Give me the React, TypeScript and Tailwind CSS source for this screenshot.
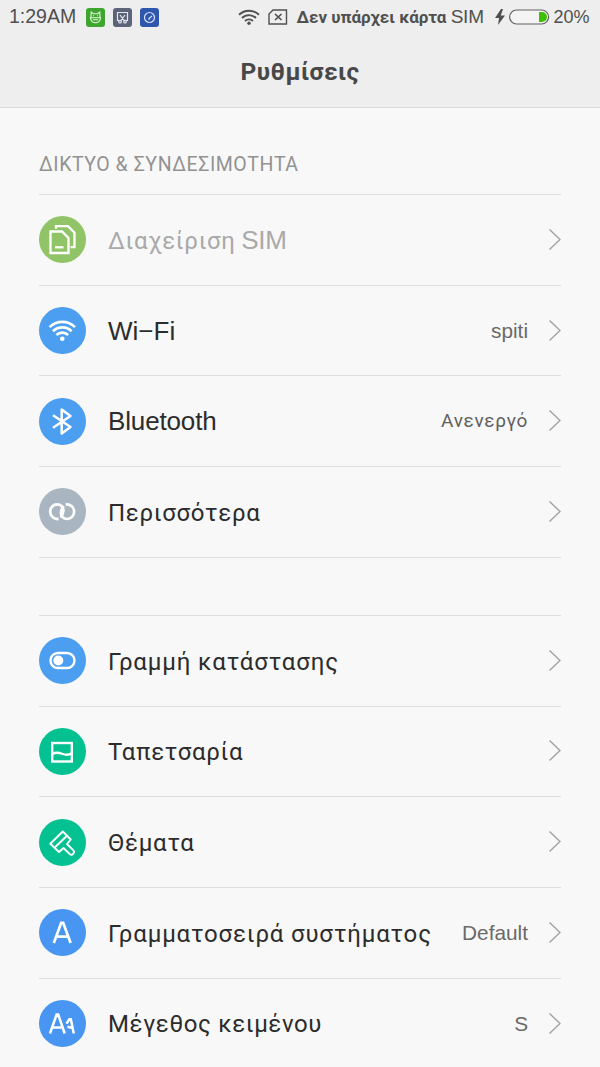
import React from "react";

const latin = "font-['Liberation_Sans',Arial,sans-serif]";

function Badge({ color, children }: { color: string; children: React.ReactNode }) {
  return (
    <span className={`flex h-[47px] w-[47px] shrink-0 items-center justify-center rounded-full ${color}`}>
      <svg width="47" height="47" viewBox="0 0 47 47" fill="none" stroke="#fff" strokeWidth="2">
        {children}
      </svg>
    </span>
  );
}

function Chevron() {
  return (
    <svg className="ml-[20px] shrink-0" width="13" height="22" viewBox="0 0 13 22" fill="none" stroke="#a4a4a4" strokeWidth="1.5">
      <path d="M1.500 .5l10.500 10L1.500 20.500" />
    </svg>
  );
}

type RowProps = {
  icon: React.ReactNode;
  label: React.ReactNode;
  value?: React.ReactNode;
  muted?: boolean;
};

function Row({ icon, label, value, muted }: RowProps) {
  return (
    <li className="flex h-[90.7px] items-center border-t border-[#dedede]">
      {icon}
      <span className={`ml-[22px] mt-[1.500px] grow whitespace-nowrap text-[24px] leading-[30px] ${muted ? "text-[#a9a9a9]" : "text-[#2c2c2c]"}`}>
        {label}
      </span>
      {value}
      <Chevron />
    </li>
  );
}

const simIcon = (
  <Badge color="bg-[#90c466]">
    <g strokeWidth="2.300">
      <path d="M11.500 15.500h11.500l6.500 6.500v15h-18z" />
      <path d="M17 12.800v-2.600h12l6.500 6.500v14.500h-4" />
      <path d="M16 31.300h8.500" />
    </g>
  </Badge>
);

const wifiIcon = (
  <Badge color="bg-[#4b9ef0]">
    <g strokeWidth="2.600">
      <path d="M10.600 20.100a18 18 0 0 1 25.400 0" />
      <path d="M14 24.200a13.300 13.300 0 0 1 18.600 0" />
      <path d="M17.400 28a8.500 8.500 0 0 1 11.800 0" />
    </g>
    <circle cx="23.300" cy="31.800" r="2.300" fill="#fff" stroke="none" />
  </Badge>
);

const bluetoothIcon = (
  <Badge color="bg-[#4b9ef0]">
    <path d="M14 17.300l17.500 11.700-8.800 6.500V11.500l8.800 6.500L14 29.700" strokeWidth="2.500" strokeLinejoin="round" />
  </Badge>
);

const linkIcon = (
  <Badge color="bg-[#a9b6c2]">
    <g strokeWidth="2.700">
      <path d="M19.600 31C14.500 31.400 11.200 28 11.200 23.700c0-4.200 3.100-7.300 6.900-7.300 3.900 0 6.500 2.900 6.300 6.300-.2 3-1.200 4.900-2.900 6.600" />
      <path d="M26.700 16.400C31.800 16 35.100 19.400 35.100 23.700c0 4.200-3.100 7.300-6.900 7.300-3.900 0-6.500-2.900-6.300-6.300.2-3 1.200-4.900 2.900-6.600" />
    </g>
  </Badge>
);

const toggleIcon = (
  <Badge color="bg-[#4b9ef0]">
    <rect x="11.500" y="16" width="24" height="15" rx="7.500" strokeWidth="2.400" />
    <circle cx="19.300" cy="23.500" r="5" fill="#fff" stroke="none" />
  </Badge>
);

const wallpaperIcon = (
  <Badge color="bg-[#04c192]">
    <rect x="13.200" y="15" width="19.600" height="18.500" strokeWidth="2.400" />
    <path d="M13.500 26c3-1.800 5.500-1.800 9.500-.2s7 1.400 10-.8" strokeWidth="2.300" />
  </Badge>
);

const brushIcon = (
  <Badge color="bg-[#04c192]">
    <g strokeWidth="1.900" strokeLinejoin="round">
      <path d="M11.300 24.700L23.800 12.500 31.800 20.500 28 25l6.200 6.200a2.600 2.600 0 0 1-3.700 3.700L24.500 29l-4.500 4z" />
      <path d="M15.500 28.700L28 16.700" />
    </g>
  </Badge>
);

const fontIcon = (
  <Badge color="bg-[#4896f2]">
    <path d="M14.800 34L22.200 13.800h2L31.600 34M17.500 27.700h11.400" strokeWidth="2.700" />
  </Badge>
);

const sizeIcon = (
  <Badge color="bg-[#4896f2]">
    <path d="M11 33.500L17.600 14.500h1.600L25.700 33.500M13.200 27.500h10.400" strokeWidth="2.500" />
    <path d="M34.800 33.500L31.800 19.200h-1.400l-2.900 4.400M33.500 28l-5-1.200" strokeWidth="2.500" />
  </Badge>
);

function Value({ children }: { children: React.ReactNode }) {
  return <span className={`mt-px whitespace-nowrap text-[20.800px] leading-[26px] text-[#6a6a6a] ${latin}`}>{children}</span>;
}

function StatusBar() {
  return (
    <div className="flex h-[34px] items-center text-[#505050]">
      <span className={`ml-[9px] w-[77px] whitespace-nowrap text-[19.500px] ${latin}`}>1:29AM</span>
      <svg className="shrink-0" width="19" height="19" viewBox="0 0 19 19" fill="none" stroke="#e3f5dd" strokeWidth="1.100">
        <rect width="19" height="19" rx="3" fill="#3ea62e" stroke="none" />
        <path d="M5 9.500L5.200 4l2.300 1.800h4L13.800 4l.2 5.500M4.500 9.800h10a5 5 0 0 1-10 0zM7 11.800h5" />
        <path d="M7 7.800h1M11 7.800h1" />
      </svg>
      <svg className="ml-[8px] shrink-0" width="19" height="19" viewBox="0 0 19 19" fill="none" stroke="#e6e8ee" strokeWidth="1.200">
        <rect width="19" height="19" rx="3" fill="#5b6478" stroke="none" />
        <path d="M6 12.500H4.500v-8h10v8H13M7 7l4.500 6M12 7l-4.500 6" />
        <circle cx="7" cy="13.700" r="1.300" />
        <circle cx="12" cy="13.700" r="1.300" />
      </svg>
      <svg className="ml-[8px] shrink-0" width="19" height="19" viewBox="0 0 19 19" fill="none" stroke="#d5e0f7" strokeWidth="1.200">
        <rect width="19" height="19" rx="3" fill="#2f56ad" stroke="none" />
        <circle cx="9.500" cy="9.500" r="5" />
        <path d="M9 10.500l3-2.500M8 11h2" />
      </svg>
      <svg className="mb-px ml-[79px] shrink-0" width="22" height="16" viewBox="0 0 22 16" fill="none" stroke="#505050" strokeWidth="1.900">
        <path d="M1 5.800a14.300 14.300 0 0 1 20 0" />
        <path d="M4 9a10 10 0 0 1 14 0" />
        <path d="M7 12a5.800 5.800 0 0 1 8 0" />
        <circle cx="11" cy="14.200" r="1.700" fill="#505050" stroke="none" />
      </svg>
      <svg className="mb-px ml-[8px] shrink-0" width="20" height="16" viewBox="0 0 20 16" fill="none" stroke="#505050" strokeWidth="1.400">
        <path d="M5 1h13.500v14H1V5z" />
        <path d="M7 5l6.500 6M13.500 5L7 11" strokeWidth="1.700" />
      </svg>
      <span className="ml-[8.500px] w-[188.500px] whitespace-nowrap text-[17px] font-bold tracking-[0px]">
        Δεν υπάρχει κάρτα <span className={`text-[19px] font-normal tracking-[-0.200px] ${latin}`}>SIM</span>
      </span>
      <svg className="mb-px ml-[10px] shrink-0" width="10" height="16" viewBox="0 0 10 16" fill="#505050">
        <path d="M6 0L0 9h4L3 16l7-9.500H5.800L8 0z" />
      </svg>
      <svg className="mb-px ml-[4px] shrink-0" width="41" height="16" viewBox="0 0 41 16">
        <rect x=".6" y="1" width="39" height="14" rx="7" fill="#f4f4f4" stroke="#606060" strokeWidth="1.200" />
        <path d="M30 3H33a5 5 0 0 1 0 10h-3z" fill="#3fbf08" />
      </svg>
      <span className={`ml-[3.500px] whitespace-nowrap text-[18px] ${latin}`}>20%</span>
    </div>
  );
}

export default function App() {
  return (
    <div className="h-[1067px] w-[600px] overflow-hidden bg-[#f8f8f8] font-[Roboto,sans-serif]">
      <header className="h-[108px] border-b border-[#dadada] bg-[#eeeeee]">
        <StatusBar />
        <h1 className="mt-[22px] text-center text-[24.500px] font-bold leading-[32px] tracking-[0.400px] text-[#484848]">Ρυθμίσεις</h1>
      </header>
      <main className="pl-[39px] pr-[39px]">
        <h2 className="flex h-[86px] items-end pb-[16px] text-[19.500px] leading-[26px] tracking-[0.550px] text-[#929292]">ΔΙΚΤΥΟ &amp; ΣΥΝΔΕΣΙΜΟΤΗΤΑ</h2>
        <ul className="border-b border-[#dedede]">
          <Row
            muted
            icon={simIcon}
            label={<span className="tracking-[0.700px]">Διαχείριση <span className={`-ml-px text-[26px] tracking-[-0.300px] ${latin}`}>SIM</span></span>}
          />
          <Row icon={wifiIcon} label={<span className={`text-[26px] ${latin}`}>Wi−Fi</span>} value={<Value>spiti</Value>} />
          <Row
            icon={bluetoothIcon}
            label={<span className={`text-[26px] tracking-[-0.150px] ${latin}`}>Bluetooth</span>}
            value={<span className="whitespace-nowrap text-[19px] leading-[26px] tracking-[0.650px] text-[#5f5f5f]">Ανενεργό</span>}
          />
          <Row icon={linkIcon} label={<span className="tracking-[0.730px]">Περισσότερα</span>} />
        </ul>
        <ul className="mt-[57.200px]">
          <Row icon={toggleIcon} label={<span className="tracking-[0.860px]">Γραμμή κατάστασης</span>} />
          <Row icon={wallpaperIcon} label={<span className="tracking-[0.700px]">Ταπετσαρία</span>} />
          <Row icon={brushIcon} label={<span className="tracking-[0.730px]">Θέματα</span>} />
          <Row icon={fontIcon} label={<span className="tracking-[0.830px]">Γραμματοσειρά συστήματος</span>} value={<Value>Default</Value>} />
          <Row icon={sizeIcon} label={<span className="tracking-[0.630px]">Μέγεθος κειμένου</span>} value={<Value>S</Value>} />
        </ul>
      </main>
    </div>
  );
}
